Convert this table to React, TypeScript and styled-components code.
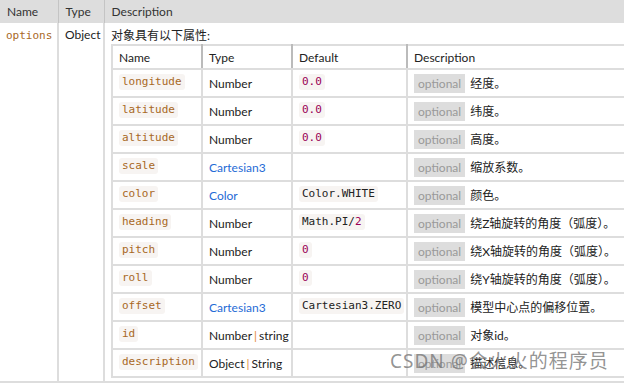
import React from "react";
import styled, { createGlobalStyle } from "styled-components";

const GlobalStyle = createGlobalStyle`
  html, body {
    margin: 0;
    padding: 0;
    background: #fff;
  }
  body {
    font-family: Lato, "Noto Sans CJK SC", sans-serif;
    font-size: 12px;
    color: #222;
    overflow: hidden;
  }
`;

const Page = styled.div`
  width: 624px;
  height: 383px;
  position: relative;
  overflow: hidden;
`;

const OuterTable = styled.table`
  width: 650px;
  border-collapse: collapse;
  table-layout: fixed;
`;

const OuterHead = styled.th<{ $w?: number }>`
  box-sizing: border-box;
  width: ${(p) => (p.$w ? `${p.$w}px` : "auto")};
  height: 23px;
  padding: 0 7px;
  background: #ddd;
  border-left: 1px solid #c4c4c4;
  text-align: left;
  font-weight: normal;
  color: #333;
  &:first-child {
    border-left: none;
  }
`;

const OuterCell = styled.td`
  box-sizing: border-box;
  vertical-align: top;
  padding: 4px 6px 3px 6px;
  border-left: 2px solid #ddd;
  border-bottom: 2px solid #ddd;
  &:first-child {
    border-left: none;
  }
`;

const Intro = styled.div`
  line-height: 17px;
`;

const ParamName = styled.span`
  font-family: "DejaVu Sans Mono", monospace;
  font-size: 11px;
  color: #a8681f;
`;

const InnerTable = styled.table`
  width: 100%;
  border-collapse: collapse;
  table-layout: fixed;
  border: 2px solid #ddd;
`;

const InnerHead = styled.th<{ $w?: number }>`
  box-sizing: border-box;
  width: ${(p) => (p.$w ? `${p.$w}px` : "auto")};
  height: 24px;
  padding: 0 6px;
  text-align: left;
  font-weight: normal;
  border-left: 2px solid #bbb;
  border-bottom: 2px solid #ddd;
  &:first-child {
    border-left: none;
  }
`;

const InnerCell = styled.td`
  box-sizing: border-box;
  height: 28px;
  padding: 0 6px;
  vertical-align: middle;
  border-left: 2px solid #ddd;
  border-bottom: 2px solid #ddd;
  white-space: nowrap;
  &:first-child {
    border-left: none;
  }
`;

const Code = styled.code<{ $tone?: "name" | "plain" }>`
  display: inline-block;
  font-family: "DejaVu Sans Mono", monospace;
  font-size: 11px;
  line-height: 16px;
  padding: 0 3px;
  border-radius: 3px;
  background: #f7f4f2;
  color: ${(p) => (p.$tone === "name" ? "#a8681f" : "#222")};
  position: relative;
  top: -2px;
`;

const Num = styled.span`
  color: #990055;
`;

const TypeLink = styled.span`
  color: #1f6bd6;
`;

const Sep = styled.span`
  color: #e4883a;
  margin: 0 2px;
`;

const Optional = styled.span`
  display: inline-block;
  background: #ddd;
  color: #999;
  padding: 0 4px;
  line-height: 19px;
  margin-right: 5px;
`;

const Watermark = styled.div`
  position: absolute;
  left: 390px;
  top: 346px;
  font-family: "Noto Sans", "Noto Sans CJK SC", sans-serif;
  font-size: 19px;
  color: rgba(120, 120, 120, 0.8);
  letter-spacing: 1px;
  white-space: nowrap;
  pointer-events: none;
`;

type Row = {
  name: string;
  type: React.ReactNode;
  def?: React.ReactNode;
  desc: string;
  optional: boolean;
};

const rows: Row[] = [
  { name: "longitude", type: "Number", def: <Num>0.0</Num>, desc: "经度。", optional: true },
  { name: "latitude", type: "Number", def: <Num>0.0</Num>, desc: "纬度。", optional: true },
  { name: "altitude", type: "Number", def: <Num>0.0</Num>, desc: "高度。", optional: true },
  { name: "scale", type: <TypeLink>Cartesian3</TypeLink>, desc: "缩放系数。", optional: true },
  { name: "color", type: <TypeLink>Color</TypeLink>, def: "Color.WHITE", desc: "颜色。", optional: true },
  {
    name: "heading",
    type: "Number",
    def: (
      <>
        Math.PI/<Num>2</Num>
      </>
    ),
    desc: "绕Z轴旋转的角度（弧度）。",
    optional: true,
  },
  { name: "pitch", type: "Number", def: <Num>0</Num>, desc: "绕X轴旋转的角度（弧度）。", optional: true },
  { name: "roll", type: "Number", def: <Num>0</Num>, desc: "绕Y轴旋转的角度（弧度）。", optional: true },
  { name: "offset", type: <TypeLink>Cartesian3</TypeLink>, def: "Cartesian3.ZERO", desc: "模型中心点的偏移位置。", optional: true },
  {
    name: "id",
    type: (
      <>
        Number<Sep>|</Sep>string
      </>
    ),
    desc: "对象id。",
    optional: true,
  },
  {
    name: "description",
    type: (
      <>
        Object<Sep>|</Sep>String
      </>
    ),
    desc: "描述信息。",
    optional: true,
  },
];

export default function App() {
  return (
    <Page>
      <GlobalStyle />
      <OuterTable>
        <thead>
          <tr>
            <OuterHead $w={58}>Name</OuterHead>
            <OuterHead $w={46}>Type</OuterHead>
            <OuterHead>Description</OuterHead>
          </tr>
        </thead>
        <tbody>
          <tr>
            <OuterCell>
              <ParamName>options</ParamName>
            </OuterCell>
            <OuterCell>Object</OuterCell>
            <OuterCell>
              <Intro>对象具有以下属性:</Intro>
              <InnerTable>
                <thead>
                  <tr>
                    <InnerHead $w={90}>Name</InnerHead>
                    <InnerHead $w={90}>Type</InnerHead>
                    <InnerHead $w={115}>Default</InnerHead>
                    <InnerHead>Description</InnerHead>
                  </tr>
                </thead>
                <tbody>
                  {rows.map((r) => (
                    <tr key={r.name}>
                      <InnerCell>
                        <Code $tone="name">{r.name}</Code>
                      </InnerCell>
                      <InnerCell>{r.type}</InnerCell>
                      <InnerCell>{r.def !== undefined && <Code>{r.def}</Code>}</InnerCell>
                      <InnerCell>
                        {r.optional && <Optional>optional</Optional>}
                        {r.desc}
                      </InnerCell>
                    </tr>
                  ))}
                </tbody>
              </InnerTable>
            </OuterCell>
          </tr>
        </tbody>
      </OuterTable>
      <Watermark>CSDN @会火火的程序员</Watermark>
    </Page>
  );
}
